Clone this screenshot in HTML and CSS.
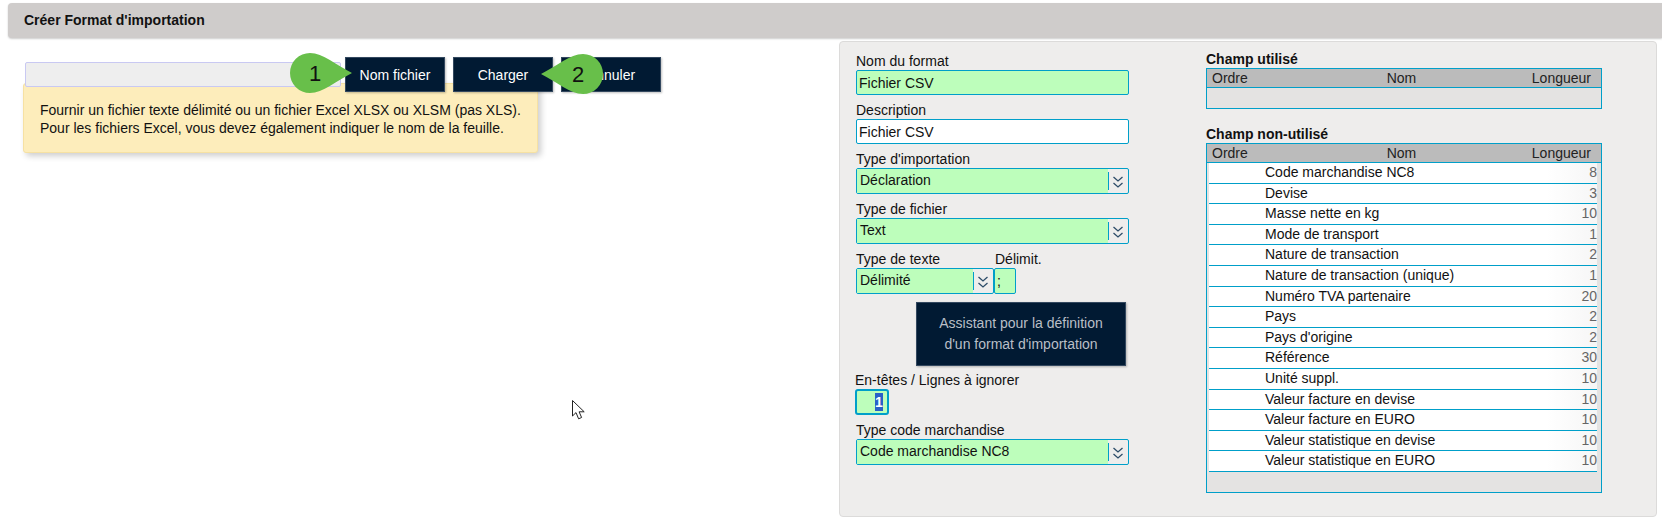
FILE: index.html
```html
<!DOCTYPE html>
<html lang="fr">
<head>
  <meta charset="UTF-8">
  <title>Créer Format d'importation</title>
  <link rel="stylesheet" href="styles.css">
</head>
<body>
  <svg class="defs" width="0" height="0">
    <symbol id="chevrons" viewBox="0 0 12 14">
      <polyline points="1.5,2 6,6 10.5,2"></polyline>
      <polyline points="1.5,8 6,12 10.5,8"></polyline>
    </symbol>
  </svg>

  <div class="title-bar">Créer Format d'importation</div>

  <div class="main">
    <div class="upload">
      <div class="hint">
        Fournir un fichier texte délimité ou un fichier Excel XLSX ou XLSM (pas XLS).<br>
        Pour les fichiers Excel, vous devez également indiquer le nom de la feuille.
      </div>
      <div class="toolbar">
        <div class="file-box"></div>
        <button class="btn btn-name">Nom fichier</button>
        <button class="btn">Charger</button>
        <button class="btn">Annuler</button>
      </div>

      <svg class="callout callout-1" width="62" height="40" viewBox="0 0 62 40">
        <path d="M20 0C33 0 46 12 62 20C46 28 33 40 20 40A20 20 0 0 1 20 0Z"></path>
        <text x="19" y="28">1</text>
      </svg>
      <svg class="callout callout-2" width="62" height="40" viewBox="0 0 62 40">
        <path d="M42 0C29 0 16 12 0 20C16 28 29 40 42 40A20 20 0 0 0 42 0Z"></path>
        <text x="31" y="28">2</text>
      </svg>
      <svg class="cursor" width="14" height="20" viewBox="0 0 14 20">
        <path d="M.5.5V16L4 12.6 6.6 18.8 9.6 17.5 7.1 11.8H12.2Z"></path>
      </svg>
    </div>

    <div class="panel">
      <div class="form-col">
        <div class="field">
          <label>Nom du format</label>
          <input class="input required" type="text" value="Fichier CSV">
        </div>
        <div class="field">
          <label>Description</label>
          <input class="input" type="text" value="Fichier CSV">
        </div>
        <div class="field">
          <label>Type d'importation</label>
          <div class="select">
            <span class="select-value">Déclaration</span>
            <span class="select-arrow"><svg width="12" height="14"><use href="#chevrons"></use></svg></span>
          </div>
        </div>
        <div class="field">
          <label>Type de fichier</label>
          <div class="select">
            <span class="select-value">Text</span>
            <span class="select-arrow"><svg width="12" height="14"><use href="#chevrons"></use></svg></span>
          </div>
        </div>
        <div class="field-row">
          <div class="field field-type">
            <label>Type de texte</label>
            <div class="select">
              <span class="select-value">Délimité</span>
              <span class="select-arrow"><svg width="12" height="14"><use href="#chevrons"></use></svg></span>
            </div>
          </div>
          <div class="field field-delim">
            <label>Délimit.</label>
            <input class="input input-delim required" type="text" value=";">
          </div>
        </div>
        <button class="btn btn-wizard">Assistant pour la définition<br>d'un format d'importation</button>
        <div class="field field-skip">
          <label>En-têtes / Lignes à ignorer</label>
          <div class="number-box"><span class="selected">1</span></div>
        </div>
        <div class="field">
          <label>Type code marchandise</label>
          <div class="select">
            <span class="select-value">Code marchandise NC8</span>
            <span class="select-arrow"><svg width="12" height="14"><use href="#chevrons"></use></svg></span>
          </div>
        </div>
      </div>

      <div class="list-col">
        <h3 class="list-title">Champ utilisé</h3>
        <div class="list list-used">
          <div class="list-head"><span>Ordre</span><span>Nom</span><span>Longueur</span></div>
        </div>

        <h3 class="list-title list-title-2">Champ non-utilisé</h3>
        <div class="list list-unused">
          <div class="list-head"><span>Ordre</span><span>Nom</span><span>Longueur</span></div>
          <div class="rows">
            <div class="row"><span class="row-name">Code marchandise NC8</span><span class="row-len">8</span></div>
            <div class="row"><span class="row-name">Devise</span><span class="row-len">3</span></div>
            <div class="row"><span class="row-name">Masse nette en kg</span><span class="row-len">10</span></div>
            <div class="row"><span class="row-name">Mode de transport</span><span class="row-len">1</span></div>
            <div class="row"><span class="row-name">Nature de transaction</span><span class="row-len">2</span></div>
            <div class="row"><span class="row-name">Nature de transaction (unique)</span><span class="row-len">1</span></div>
            <div class="row"><span class="row-name">Numéro TVA partenaire</span><span class="row-len">20</span></div>
            <div class="row"><span class="row-name">Pays</span><span class="row-len">2</span></div>
            <div class="row"><span class="row-name">Pays d'origine</span><span class="row-len">2</span></div>
            <div class="row"><span class="row-name">Référence</span><span class="row-len">30</span></div>
            <div class="row"><span class="row-name">Unité suppl.</span><span class="row-len">10</span></div>
            <div class="row"><span class="row-name">Valeur facture en devise</span><span class="row-len">10</span></div>
            <div class="row"><span class="row-name">Valeur facture en EURO</span><span class="row-len">10</span></div>
            <div class="row"><span class="row-name">Valeur statistique en devise</span><span class="row-len">10</span></div>
            <div class="row"><span class="row-name">Valeur statistique en EURO</span><span class="row-len">10</span></div>
          </div>
        </div>
      </div>
    </div>
  </div>
</body>
</html>
```

FILE: styles.css
```css
:root {
  --teal: #009fc9;
  --navy: #011a33;
  --green: #bdfebb;
  --panel: #eeedec;
  --list-bg: #e4e3e2;
}

* {
  margin: 0;
  padding: 0;
  box-sizing: border-box;
}

body {
  background: #fff;
  color: #111;
  font-family: "Liberation Sans", Arial, sans-serif;
  font-size: 14px;
  overflow: hidden;
}

.defs {
  position: absolute;
}

.title-bar {
  height: 35px;
  margin: 3px 0 0 8px;
  padding-left: 16px;
  background: #cfcccb;
  border-radius: 4px 0 0 4px;
  box-shadow: 0 1px 2px rgba(0, 0, 0, 0.2);
  font-weight: bold;
  line-height: 35px;
}

.main {
  display: flex;
}

/* left side */
.upload {
  position: relative;
  width: 839px;
  height: 481px;
  padding: 19px 0 0 25px;
  flex-shrink: 0;
}

.toolbar {
  position: relative;
  display: flex;
  align-items: center;
  gap: 8px;
}

.file-box {
  width: 316px;
  height: 25px;
  margin-right: -4px;
  background: #eee;
  border: 1px solid #c9c9f2;
  border-radius: 2px;
}

.btn {
  width: 100px;
  height: 35px;
  background: var(--navy);
  border: 1px solid #33485f;
  box-shadow: 1px 1px 2px rgba(0, 0, 0, 0.25);
  color: #fff;
  font-family: inherit;
  font-size: 14px;
}

.hint {
  position: absolute;
  left: 23px;
  top: 45px;
  width: 515px;
  height: 70px;
  padding: 17px 16px 0;
  background: #fdedbb;
  border: 1px solid #f6e1a3;
  border-radius: 3px;
  box-shadow: 3px 3px 6px rgba(0, 0, 0, 0.2);
  line-height: 18px;
}

.callout {
  position: absolute;
}

.callout path {
  fill: #68bf4a;
}

.callout text {
  font-family: "Liberation Sans", Arial, sans-serif;
  font-size: 22px;
  fill: #111;
}

.callout-1 {
  left: 290px;
  top: 15px;
}

.callout-2 {
  left: 541px;
  top: 16px;
}

.cursor {
  position: absolute;
  left: 572px;
  top: 362px;
}

.cursor path {
  fill: #fff;
  stroke: #222;
  stroke-width: 1;
}

/* right panel */
.panel {
  display: flex;
  gap: 77px;
  width: 818px;
  height: 476px;
  margin-top: 3px;
  padding: 9px 0 0 16px;
  background: var(--panel);
  border: 1px solid #dcdbda;
  border-radius: 4px;
}

.form-col {
  width: 273px;
  padding-top: 2px;
  flex-shrink: 0;
}

.field {
  margin-bottom: 7px;
}

.field label {
  display: block;
  height: 16px;
  margin-bottom: 1px;
  line-height: 16px;
}

.input {
  display: block;
  width: 100%;
  height: 25px;
  padding: 0 2px;
  background: #fff;
  border: 1px solid var(--teal);
  border-radius: 2px;
  color: #111;
  font-family: inherit;
  font-size: 14px;
}

.required {
  background: var(--green);
}

.select {
  display: flex;
  height: 26px;
  background: var(--panel);
  border: 1px solid var(--teal);
  border-radius: 2px;
}

.select-value {
  flex: 1;
  padding-left: 3px;
  background: var(--green);
  line-height: 23px;
}

.select-arrow {
  position: relative;
  display: flex;
  align-items: center;
  justify-content: center;
  width: 20px;
  padding-top: 2px;
}

.select-arrow::before {
  content: '';
  position: absolute;
  left: 0;
  top: 3px;
  bottom: 3px;
  border-left: 1px solid var(--teal);
}

.select-arrow svg {
  fill: none;
  stroke: #2c4c68;
  stroke-width: 1.3;
}

.field-row {
  display: flex;
}

.field-type {
  width: 138px;
}

.field-delim {
  width: 22px;
  margin-left: 0;
}

.field-delim label {
  padding-left: 1px;
  white-space: nowrap;
}

.input-delim {
  height: 26px;
}

.btn-wizard {
  display: block;
  width: 210px;
  height: 64px;
  margin: 1px 0 6px 60px;
  color: #b9bfc7;
  line-height: 21px;
}

.field-skip {
  margin-left: -1px;
}

.number-box {
  display: flex;
  align-items: center;
  justify-content: flex-end;
  width: 34px;
  height: 26px;
  padding-right: 4px;
  background: var(--green);
  border: 2px solid var(--teal);
  border-radius: 3px;
}

.selected {
  width: 8px;
  height: 18px;
  background: #2a60c8;
  color: #fff;
  line-height: 18px;
  font-weight: bold;
  text-align: center;
}

.list-col {
  width: 396px;
}

.list-title {
  height: 16px;
  margin-bottom: 1px;
  font-size: 14px;
  line-height: 16px;
}

.list-title-2 {
  margin-top: 17px;
}

.list {
  background: var(--list-bg);
  border: 1px solid var(--teal);
}

.list-used {
  height: 41px;
}

.list-unused {
  height: 350px;
}

.list-head {
  display: grid;
  grid-template-columns: 1fr 1fr 1fr;
  height: 19px;
  padding: 0 10px 0 5px;
  background: #bbb;
  border-bottom: 1px solid var(--teal);
  color: #222;
  line-height: 18px;
}

.list-head span:nth-child(2) {
  text-align: center;
}

.list-head span:nth-child(3) {
  text-align: right;
}

.rows {
  display: grid;
  grid-template-rows: repeat(15, 1fr);
  height: 309px;
  margin: 0 4px 0 2px;
}

.row {
  display: flex;
  justify-content: space-between;
  background: #fff;
  border-bottom: 1px solid var(--teal);
  line-height: 19px;
}

.row-name {
  padding-left: 56px;
}

.row-len {
  width: 50px;
  background: linear-gradient(90deg, #fff, #f6f6f6);
  color: #666;
  text-align: right;
}
```
